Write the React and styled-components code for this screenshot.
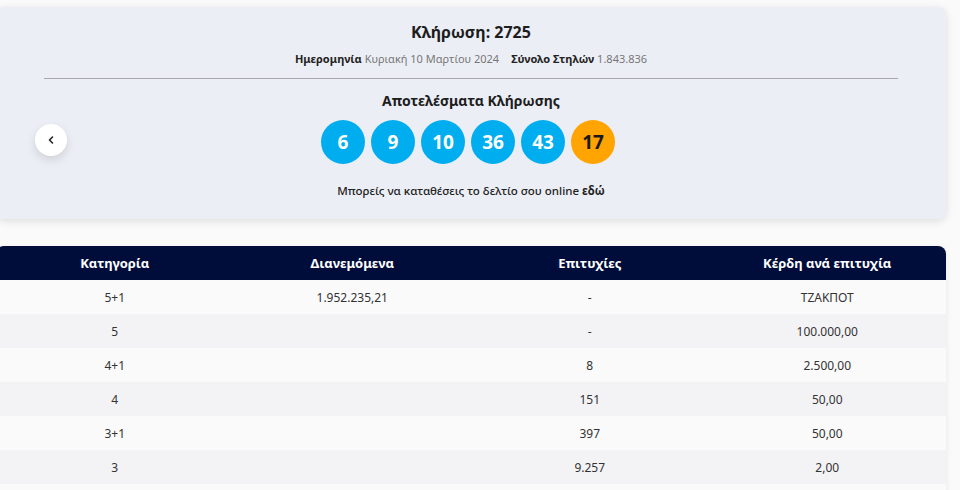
import React from 'react';
import styled, { createGlobalStyle } from 'styled-components';

const GlobalStyle = createGlobalStyle`
  body {
    margin: 0;
    background: #fafafa;
    font-family: "Noto Sans", "DejaVu Sans", sans-serif;
    color: #1d1d1d;
  }
`;

const Page = styled.div`
  width: 950px;
  margin-left: -4px;
  padding-top: 7px;
  display: flex;
  flex-direction: column;
  gap: 27px;
`;

const DrawCard = styled.section`
  position: relative;
  background: #eceef5;
  border-radius: 8px;
  box-shadow: 0 2px 8px rgba(0, 0, 0, 0.12);
  padding: 14px 48px 20px;
  display: flex;
  flex-direction: column;
  align-items: center;
`;

const Title = styled.h2`
  margin: 0;
  font-size: 16px;
  font-weight: 700;
  line-height: 22px;
`;

const Meta = styled.div`
  margin-top: 7px;
  display: flex;
  gap: 12px;
  font-size: 11px;
  line-height: 18px;
`;

const MetaItem = styled.span`
  color: #777;
  b {
    color: #222;
    font-weight: 700;
  }
`;

const Divider = styled.hr`
  align-self: stretch;
  margin: 10px 0 0;
  border: 0;
  border-top: 1px solid #a9a9ad;
`;

const Subtitle = styled.h3`
  margin: 12px 0 0;
  font-size: 14px;
  font-weight: 700;
  line-height: 20px;
`;

const Balls = styled.div`
  margin: 9px 6px 0 0;
  display: flex;
  gap: 6px;
`;

const Ball = styled.span`
  width: 44px;
  height: 44px;
  border-radius: 50%;
  display: flex;
  align-items: center;
  justify-content: center;
  font-size: 19px;
  font-weight: 700;
  background: ${p => (p.$bonus ? '#ffa400' : '#00aeef')};
  color: ${p => (p.$bonus ? '#1a1a1a' : '#fff')};
`;

const Note = styled.p`
  margin: 19px 0 0;
  font-size: 11.5px;
  font-weight: 500;
  line-height: 16px;
  color: #222;
  b {
    font-weight: 700;
  }
`;

const PrevButton = styled.button`
  position: absolute;
  left: 39px;
  top: 117px;
  width: 32px;
  height: 32px;
  border-radius: 50%;
  border: 0;
  background: #fff;
  box-shadow: 0 4px 10px rgba(0, 0, 0, 0.12);
  display: flex;
  align-items: center;
  justify-content: center;
  padding: 0;
  cursor: pointer;
`;

const Table = styled.table`
  width: 100%;
  border-collapse: collapse;
  table-layout: fixed;
  font-size: 12px;
  box-shadow: 0 2px 6px rgba(0, 0, 0, 0.08);
  border-radius: 8px 8px 0 0;
  overflow: hidden;
`;

const HeadCell = styled.th`
  background: #000d3a;
  color: #fff;
  font-weight: 700;
  font-size: 13px;
  height: 34px;
  padding: 0;
  text-align: center;
`;

const Row = styled.tr`
  background: ${p => (p.$odd ? '#f3f3f6' : '#fafafa')};
`;

const Cell = styled.td`
  height: 34px;
  padding: 0;
  text-align: center;
  color: #333;
`;

const balls = [6, 9, 10, 36, 43];

const rows = [
  ['5+1', '1.952.235,21', '-', 'ΤΖΑΚΠΟΤ'],
  ['5', '', '-', '100.000,00'],
  ['4+1', '', '8', '2.500,00'],
  ['4', '', '151', '50,00'],
  ['3+1', '', '397', '50,00'],
  ['3', '', '9.257', '2,00'],
  ['', '', '', ''],
];

function App() {
  return (
    <>
      <GlobalStyle />
      <Page>
        <DrawCard>
          <Title>Κλήρωση: 2725</Title>
          <Meta>
            <MetaItem><b>Ημερομηνία</b> Κυριακή 10 Μαρτίου 2024</MetaItem>
            <MetaItem><b>Σύνολο Στηλών</b> 1.843.836</MetaItem>
          </Meta>
          <Divider />
          <Subtitle>Αποτελέσματα Κλήρωσης</Subtitle>
          <Balls>
            {balls.map(n => <Ball key={n}>{n}</Ball>)}
            <Ball $bonus>17</Ball>
          </Balls>
          <Note>Μπορείς να καταθέσεις το δελτίο σου online <b>εδώ</b></Note>
          <PrevButton aria-label="previous">
            <svg width="10" height="10" viewBox="0 0 10 10">
              <path d="M6.5 2 L3.5 5 L6.5 8" fill="none" stroke="#222" strokeWidth="1.6" strokeLinecap="round" strokeLinejoin="round" />
            </svg>
          </PrevButton>
        </DrawCard>

        <Table>
          <thead>
            <tr>
              <HeadCell>Κατηγορία</HeadCell>
              <HeadCell>Διανεμόμενα</HeadCell>
              <HeadCell>Επιτυχίες</HeadCell>
              <HeadCell>Κέρδη ανά επιτυχία</HeadCell>
            </tr>
          </thead>
          <tbody>
            {rows.map((r, i) => (
              <Row key={i} $odd={i % 2 === 1}>
                {r.map((c, j) => <Cell key={j}>{c}</Cell>)}
              </Row>
            ))}
          </tbody>
        </Table>
      </Page>
    </>
  );
}

export default App;
